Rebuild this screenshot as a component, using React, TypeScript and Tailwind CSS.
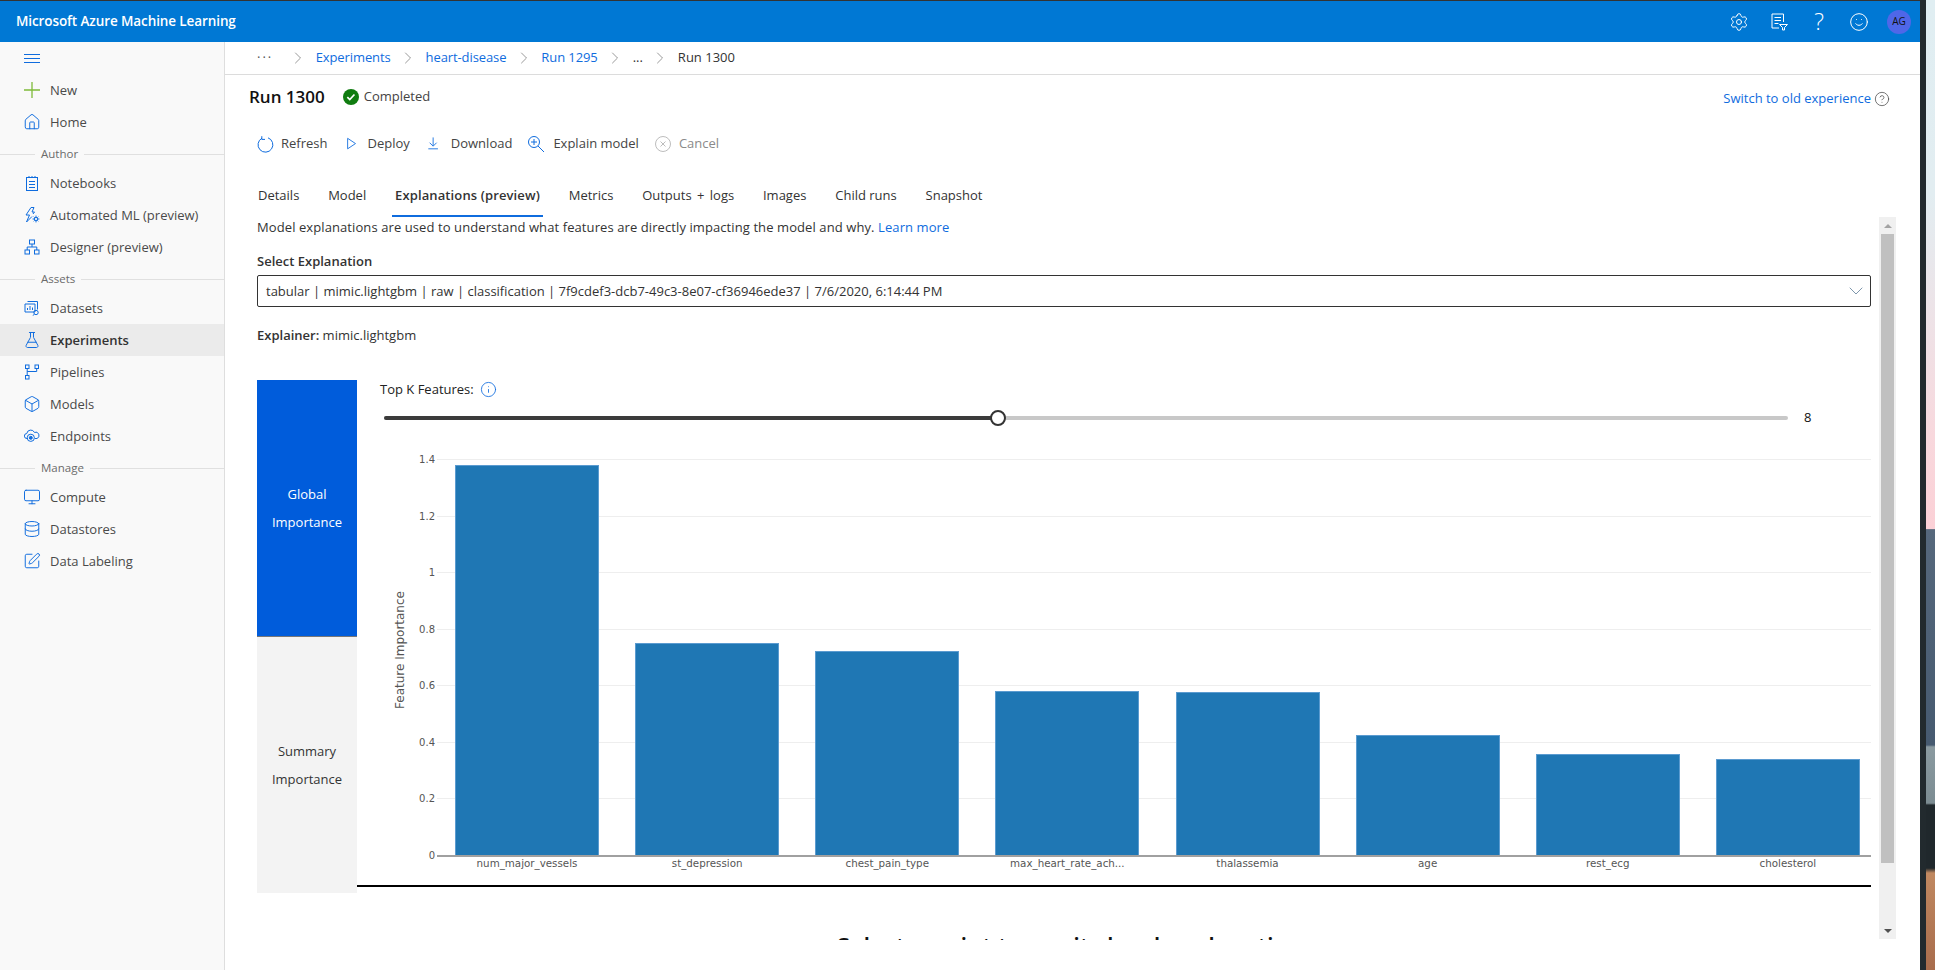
import React from "react";
import { ChevronDown, ChevronRight, Home, Box, Monitor, Database, SquarePen, FlaskConical, Settings, HelpCircle, Smile, Info } from "lucide-react";

const font = { fontFamily: '"Open Sans", "Liberation Sans", sans-serif' };
const BLUE = "#0f6cde";

function Svg({ children, size = 16, color = BLUE }: { children: React.ReactNode; size?: number; color?: string }) {
  return (
    <svg width={size} height={size} viewBox="0 0 16 16" fill="none" stroke={color} strokeWidth="1" className="shrink-0">
      {children}
    </svg>
  );
}

const NotebookIcon = () => (
  <Svg>
    <rect x="2.5" y="2.5" width="11" height="13" />
    <path d="M5 1v2M8 1v2M11 1v2M5 6.5h6M5 9.5h6M5 12.5h6" />
  </Svg>
);
const BoltIcon = () => (
  <Svg>
    <path d="M7 .5 2 8h3.5L2.5 15 8 9.5M7 .5h3L8 5h2.5L9 7" />
    <circle cx="12" cy="12" r="1.6" />
    <path d="M12 8.6v1.5M12 13.9v1.5M8.6 12h1.5M13.9 12h1.5M9.7 9.7l1 1M13.3 13.3l1 1M14.3 9.7l-1 1M10.7 13.3l-1 1" />
  </Svg>
);
const DesignerIcon = () => (
  <Svg>
    <rect x="5.5" y="1" width="5" height="4" />
    <rect x="1" y="11" width="4.5" height="4" />
    <rect x="10.5" y="11" width="4.5" height="4" />
    <path d="M8 5v3M3.2 11V8h9.6v3" />
  </Svg>
);
const DatasetsIcon = () => (
  <Svg>
    <path d="M3.5 1.5h10v8M1 4h10v8H1z" />
    <path d="M3.5 10V8M6 10V6M8.5 10V7.5" />
    <circle cx="12" cy="12.5" r="2.2" />
    <path d="m10.4 14.2-1.7 1.5" />
  </Svg>
);
const PipelinesIcon = () => (
  <Svg>
    <rect x="1.5" y="1" width="3.5" height="3.5" />
    <rect x="11" y="1" width="3.5" height="3.5" />
    <rect x="1.5" y="11.5" width="3.5" height="3.5" />
    <path d="M3.2 4.5v7M3.2 7.5h9.5v-3" />
  </Svg>
);
const EndpointsIcon = () => (
  <Svg>
    <path d="M4 10.5H3A2.5 2.5 0 0 1 2.8 5.5 4 4 0 0 1 10.4 4.4 3 3 0 0 1 13 10.5h-2" />
    <circle cx="6.8" cy="9.8" r="3.6" />
    <circle cx="6.8" cy="9.8" r="1.5" fill={BLUE} />
  </Svg>
);
const RefreshIcon = () => (
  <svg width="17" height="17" viewBox="0 0 17 17" fill="none" stroke={BLUE} strokeWidth="1" className="shrink-0">
    <path d="M5 2.2A7.4 7.4 0 1 0 11 1.8" />
    <path d="M4.8 .2V3.4H8" />
  </svg>
);
const DeployIcon = () => (
  <Svg size={14}>
    <path d="M3 1.5v12l9-6z" />
  </Svg>
);
const DownloadIcon = () => (
  <Svg size={14}>
    <path d="M7 .5v9.5M3 6.5 7 10.5l4-4M1.5 13.5h11" />
  </Svg>
);
const ExplainIcon = () => (
  <svg width="18" height="18" viewBox="0 0 18 18" fill="none" stroke={BLUE} strokeWidth="1" className="shrink-0">
    <circle cx="7" cy="7" r="5.5" />
    <path d="M7 4v6M4 7h6M11 11l6 6" />
  </svg>
);
const CancelIcon = () => (
  <svg width="16" height="16" viewBox="0 0 16 16" fill="none" stroke="#bdbdbd" strokeWidth="1" className="shrink-0">
    <circle cx="8" cy="8" r="7.5" />
    <path d="m5.5 5.5 5 5M10.5 5.5l-5 5" />
  </svg>
);
const FeedbackListIcon = () => (
  <svg width="17" height="18" viewBox="0 0 17 18" fill="none" stroke="white" strokeWidth="1" className="shrink-0">
    <path d="M12.5 9V1H1v14h7" />
    <path d="M3.5 4.5h6.5M3.5 7.5h6.5M3.5 10.5h4" />
    <path d="M8.5 11.5h8l-3 3v2.5h-2v-2.5z" />
  </svg>
);
const lucideProps = { size: 18, strokeWidth: 1.3, color: BLUE, className: "shrink-0" };

type NavItem = { label: string; icon: React.ReactNode; active?: boolean };

const nav1: NavItem[] = [
  { label: "Notebooks", icon: <NotebookIcon /> },
  { label: "Automated ML (preview)", icon: <BoltIcon /> },
  { label: "Designer (preview)", icon: <DesignerIcon /> },
];
const nav2: NavItem[] = [
  { label: "Datasets", icon: <DatasetsIcon /> },
  { label: "Experiments", icon: <FlaskConical {...lucideProps} />, active: true },
  { label: "Pipelines", icon: <PipelinesIcon /> },
  { label: "Models", icon: <Box {...lucideProps} /> },
  { label: "Endpoints", icon: <EndpointsIcon /> },
];
const nav3: NavItem[] = [
  { label: "Compute", icon: <Monitor {...lucideProps} /> },
  { label: "Datastores", icon: <Database {...lucideProps} /> },
  { label: "Data Labeling", icon: <SquarePen {...lucideProps} /> },
];

function NavRow({ item }: { item: NavItem }) {
  return (
    <div className={`flex h-8 items-center gap-[10px] pl-6 text-[13px] ${item.active ? "bg-[#ebebeb] font-semibold text-[#333]" : "text-[#4a4a4a]"}`}>
      <span className="flex w-[16px] justify-center">{item.icon}</span>
      <span className="pt-px">{item.label}</span>
    </div>
  );
}

function NavSection({ title }: { title: string }) {
  return (
    <div className="flex h-[29px] items-center pt-[3px] text-[11.5px] text-[#6b6b6b]">
      <div className="h-px w-[35px] bg-[#e0e0e0]" />
      <span className="px-[6px]">{title}</span>
      <div className="h-px flex-1 bg-[#e0e0e0]" />
    </div>
  );
}

const crumbs = ["Experiments", "heart-disease", "Run 1295"];

const tabs = ["Details", "Model", "Explanations (preview)", "Metrics", "Outputs + logs", "Images", "Child runs", "Snapshot"];

const bars = [
  { label: "num_major_vessels", top: 465 },
  { label: "st_depression", top: 643 },
  { label: "chest_pain_type", top: 651 },
  { label: "max_heart_rate_ach...", top: 691 },
  { label: "thalassemia", top: 692 },
  { label: "age", top: 735 },
  { label: "rest_ecg", top: 754 },
  { label: "cholesterol", top: 759 },
];

const ticks = ["1.4", "1.2", "1", "0.8", "0.6", "0.4", "0.2"];

function Plot() {
  const scale = 56.5;
  return (
    <div className="relative mt-[18px] h-[440px]">
      <div className="absolute top-[197px] left-[-18px] w-[122px] -rotate-90 text-center text-[12px] whitespace-nowrap text-[#555] [font-family:'DejaVu_Sans',sans-serif]">Feature Importance</div>
      {ticks.map((t, i) => (
        <div key={t} className="absolute right-0 left-0 flex items-center" style={{ top: 15 + i * scale - 7 }}>
          <span className="w-[78px] pt-px text-right text-[10px] leading-[14px] text-[#555] [font-family:'DejaVu_Sans',sans-serif]">{t}</span>
          <div className="ml-[2px] h-px flex-1 bg-[#eeeeee]" />
        </div>
      ))}
      <div className="absolute top-[404px] right-0 left-0 flex items-center">
        <span className="w-[78px] pt-px text-right text-[10px] leading-[14px] text-[#555] [font-family:'DejaVu_Sans',sans-serif]">0</span>
        <div className="ml-[2px] h-[2px] flex-1 bg-[#a0a0a0]" />
      </div>
      <div className="absolute top-0 left-[98px] flex gap-[36.14px]">
        {bars.map((b) => (
          <div key={b.label} className="relative h-[411px] w-[144px]">
            <div className="absolute right-0 bottom-0 left-0 border border-b-0 border-[#5b9bd0] bg-[#1f77b4]" style={{ height: 855 - b.top }} />
          </div>
        ))}
      </div>
      <div className="absolute top-[412px] left-[98px] flex gap-[36.14px]">
        {bars.map((b) => (
          <div key={b.label} className="w-[144px] text-center text-[10.3px] leading-[14px] text-[#555] [font-family:'DejaVu_Sans',sans-serif]">{b.label}</div>
        ))}
      </div>
    </div>
  );
}

export default function App() {
  return (
    <div className="flex h-[970px] w-[1935px] overflow-hidden bg-white" style={font}>
      <div className="flex w-[1920px] shrink-0 flex-col">
        <div className="h-px bg-[#333]" />
        <header className="flex h-[41px] shrink-0 items-center bg-[#0078d4] pr-[1px] pl-4 text-white">
          <span className="text-[13.5px] font-semibold tracking-[-0.1px]">Microsoft Azure Machine Learning</span>
          <div className="ml-auto flex items-center">
            <span className="flex w-10 justify-center"><Settings size={20} strokeWidth={1.2} color="white" /></span>
            <span className="flex w-10 justify-center"><FeedbackListIcon /></span>
            <span className="flex w-10 justify-center text-[23px] leading-none font-light text-white">?</span>
            <span className="flex w-10 justify-center"><Smile size={20} strokeWidth={1.2} color="white" /></span>
            <span className="flex w-10 justify-center">
              <span className="flex h-6 w-6 items-center justify-center rounded-full bg-[#4f67e8] text-[10px] text-[#111]">AG</span>
            </span>
          </div>
        </header>
        <div className="flex min-h-0 flex-1">
          <aside className="flex w-[225px] shrink-0 flex-col border-r border-[#dedede] bg-[#f9f9f9]">
            <div className="flex h-8 items-center pl-6">
              <Svg><path d="M0 4.5h16M0 8.5h16M0 12.5h16" /></Svg>
            </div>
            <div className="flex h-8 items-center gap-[10px] pl-6 text-[13px] text-[#4a4a4a]">
              <Svg color="#7fba3a"><path d="M8 0v16M0 8h16" strokeWidth="1.3" /></Svg>
              <span className="pt-px">New</span>
            </div>
            <NavRow item={{ label: "Home", icon: <Home {...lucideProps} /> }} />
            <NavSection title="Author" />
            {nav1.map((n) => <NavRow key={n.label} item={n} />)}
            <NavSection title="Assets" />
            {nav2.map((n) => <NavRow key={n.label} item={n} />)}
            <NavSection title="Manage" />
            {nav3.map((n) => <NavRow key={n.label} item={n} />)}
          </aside>

          <main className="flex min-w-0 flex-1 flex-col">
            <nav className="flex h-[33px] shrink-0 items-center border-b border-[#dcdcdc] pl-8 text-[13px] text-[#0f6cde]">
              <span className="w-[31px] tracking-[2px] text-[#555]">···</span>
              <ChevronRight size={20} strokeWidth={0.9} color="#777" />
              {crumbs.map((c) => (
                <React.Fragment key={c}>
                  <span className="mr-[7.3px] ml-[7.7px] tracking-[-0.1px]">{c}</span>
                  <ChevronRight size={20} strokeWidth={0.9} color="#777" />
                </React.Fragment>
              ))}
              <span className="mr-[7.3px] ml-[7.7px] text-[#333]">...</span>
              <ChevronRight size={20} strokeWidth={0.9} color="#777" />
              <span className="ml-[7.7px] text-[#333]">Run 1300</span>
            </nav>
            <div className="flex h-[43px] shrink-0 items-center pr-[30px] pl-6">
              <h1 className="text-[17px] font-semibold text-[#111]">Run 1300</h1>
              <span className="ml-[18px] flex h-4 w-4 items-center justify-center rounded-full bg-[#107c10]">
                <svg width="10" height="10" viewBox="0 0 9 9" fill="none" stroke="white" strokeWidth="1.5"><path d="m1.2 4.6 2.2 2.2 4.2-4.6" /></svg>
              </span>
              <span className="ml-[5px] text-[13px] text-[#444]">Completed</span>
              <span className="mt-1 ml-auto text-[13px] text-[#0f6cde]">Switch to old experience</span>
              <HelpCircle size={16} strokeWidth={1.1} color="#444" className="mt-1 ml-[3px]" />
            </div>
            <div className="flex h-[52px] shrink-0 items-center pl-8 text-[13px] text-[#444]">
              <RefreshIcon /><span className="ml-[7px]">Refresh</span>
              <span className="ml-[18px]"><DeployIcon /></span><span className="ml-2">Deploy</span>
              <span className="ml-[17px]"><DownloadIcon /></span><span className="ml-[10px]">Download</span>
              <span className="ml-[15px]"><ExplainIcon /></span><span className="ml-2">Explain model</span>
              <span className="ml-4"><CancelIcon /></span><span className="ml-2 text-[#8a8a8a]">Cancel</span>
            </div>
            <div className="flex h-[47px] shrink-0 pl-[30px] text-[13px] text-[#333]">
              {tabs.map((t, i) => (
                <span key={t} className={`relative mr-[22.8px] flex h-full items-center px-[3px] pt-1 ${i === 2 ? "font-semibold tracking-[0.12px]" : ""} ${i === 4 ? "[word-spacing:2px]" : ""}`}>
                  {t}
                  {i === 2 && <span className="absolute right-0 bottom-0 left-0 h-[2px] bg-[#0f6cde]" />}
                </span>
              ))}
            </div>
            <div className="flex h-[723px] shrink-0 pl-8">
              <div className="flex w-[1614px] shrink-0 flex-col overflow-hidden text-[13px] text-[#333]">
                <p className="h-5 shrink-0 leading-5 tracking-[0.09px]">
                  Model explanations are used to understand what features are directly impacting the model and why. <span className="text-[#0f6cde]">Learn more</span>
                </p>
                <div className="mt-[14px] shrink-0 leading-5 font-semibold">Select Explanation</div>
                <div className="mt-[4px] flex h-8 shrink-0 items-center justify-between rounded-[2px] border border-[#333] pr-[2px] pl-2">
                  <span className="pt-px">tabular | mimic.lightgbm | raw | classification | 7f9cdef3-dcb7-49c3-8e07-cf36946ede37 | 7/6/2020, 6:14:44 PM</span>
                  <ChevronDown size={24} strokeWidth={0.9} color="#6f8ba3" />
                </div>
                <div className="mt-[18px] shrink-0 leading-5"><b className="font-semibold">Explainer:</b> mimic.lightgbm</div>
                <div className="mt-[35px] flex h-[513px] shrink-0">
                  <div className="flex w-[100px] shrink-0 flex-col text-center leading-7">
                    <div className="flex h-[257px] items-center justify-center border-b border-[#777] bg-[#005cdb] text-white"><span>Global<br />Importance</span></div>
                    <div className="flex flex-1 items-center justify-center bg-[#f3f3f3] text-[#333]"><span>Summary<br />Importance</span></div>
                  </div>
                  <div className="flex min-w-0 flex-1 flex-col">
                    <div className="h-[507px] border-b-2 border-black">
                      <div className="flex h-[19px] items-center pl-[23px]">
                        <span className="text-[#222]">Top K Features:</span>
                        <Info size={17} strokeWidth={1.2} color="#0f6cde" className="ml-[6px]" />
                      </div>
                      <div className="mt-[11px] flex h-[16px] items-center pl-[27px]">
                        <div className="relative h-1 w-[1404px] rounded-full bg-[#c8c8c8]">
                          <div className="h-full w-[614px] rounded-full bg-[#3b3b3b]" />
                          <div className="absolute top-[-6px] left-[606px] h-4 w-4 rounded-full border-2 border-[#333] bg-white" />
                        </div>
                        <span className="ml-[16px] text-[#111]">8</span>
                      </div>
                      <Plot />
                    </div>
                  </div>
                </div>
                <div className="mt-[37px] shrink-0 pl-3 text-center text-[23.8px] leading-[33px] font-semibold text-[#111]">Select a point to see its local explanation</div>
              </div>
              <div className="ml-2 flex h-[722px] w-[17px] shrink-0 flex-col items-center bg-[#f0f0f0]">
                <div className="flex h-[17px] shrink-0 items-center"><div className="h-0 w-0 border-x-[4px] border-b-[4px] border-x-transparent border-b-[#a3a3a3]" /></div>
                <div className="h-[629px] w-[13px] bg-[#c0c0c0]" />
                <div className="mt-auto flex h-[17px] items-center"><div className="h-0 w-0 border-x-[4px] border-t-[4px] border-x-transparent border-t-[#505050]" /></div>
              </div>
            </div>
          </main>
        </div>
      </div>
      <div className="w-[6px] shrink-0 bg-[#222a2e]" />
      <div className="w-[9px] shrink-0 bg-[linear-gradient(#e0eef2_0%,#e2edf1_20%,#f8d8dd_45%,#fbd0d6_54.5%,#56687c_54.6%,#465a70_76.8%,#8a9aa0_77%,#7c8c92_82.8%,#20282c_83%,#20282c_89.5%,#c08860_90%,#a86c4c_100%)]" />
    </div>
  );
}
